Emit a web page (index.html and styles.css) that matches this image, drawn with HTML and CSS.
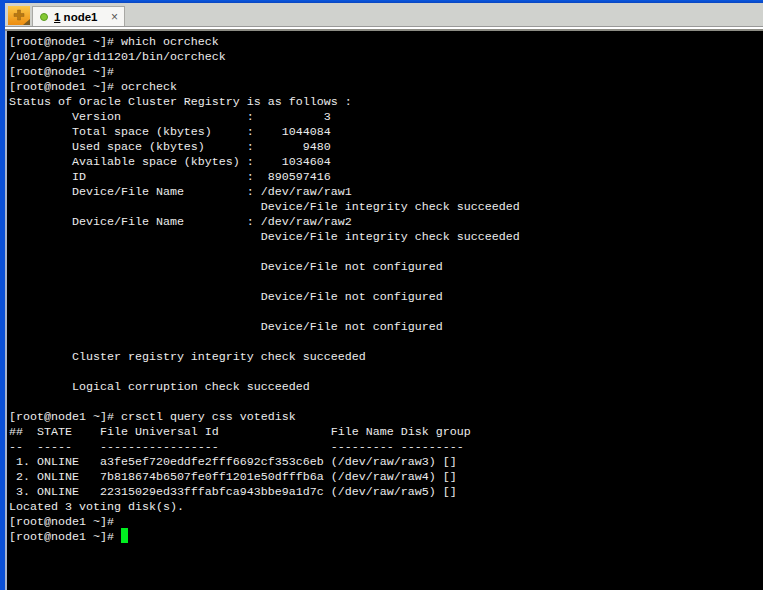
FILE: index.html
```html
<!DOCTYPE html>
<html lang="en">
<head>
<meta charset="utf-8">
<title>node1</title>
<link rel="stylesheet" href="styles.css">
</head>
<body>
<div class="window">
  <div class="titlebar"></div>
  <div class="tabbar">
    <div class="newtab">
      <svg width="22" height="19" viewBox="0 0 22 19"><path d="M9.500 4h3v3.500H16v3h-3.500V14h-3v-3.500H6v-3h3.500z" fill="#b8780f" stroke="#94621a" stroke-width=".5"/><path d="M15 19l7-6v6z" fill="#7a5a20"/></svg>
    </div>
    <div class="tab">
      <span class="dot"></span>
      <span class="tabname"><u>1</u> node1</span>
      <span class="close">×</span>
    </div>
  </div>
  <div class="rule"></div>
  <pre class="term">[root@node1 ~]# which ocrcheck
/u01/app/grid11201/bin/ocrcheck
[root@node1 ~]#
[root@node1 ~]# ocrcheck
Status of Oracle Cluster Registry is as follows :
         Version                  :          3
         Total space (kbytes)     :    1044084
         Used space (kbytes)      :       9480
         Available space (kbytes) :    1034604
         ID                       :  890597416
         Device/File Name         : /dev/raw/raw1
                                    Device/File integrity check succeeded
         Device/File Name         : /dev/raw/raw2
                                    Device/File integrity check succeeded

                                    Device/File not configured

                                    Device/File not configured

                                    Device/File not configured

         Cluster registry integrity check succeeded

         Logical corruption check succeeded

[root@node1 ~]# crsctl query css votedisk
##  STATE    File Universal Id                File Name Disk group
--  -----    -----------------                --------- ---------
 1. ONLINE   a3fe5ef720eddfe2fff6692cf353c6eb (/dev/raw/raw3) []
 2. ONLINE   7b818674b6507fe0ff1201e50dfffb6a (/dev/raw/raw4) []
 3. ONLINE   22315029ed33fffabfca943bbe9a1d7c (/dev/raw/raw5) []
Located 3 voting disk(s).
[root@node1 ~]#
[root@node1 ~]# <span class="cursor"></span></pre>
</div>
</body>
</html>
```
FILE: styles.css
```css
html, body { margin: 0; padding: 0; height: 100%; overflow: hidden; background: #000; }
.window { width: 763px; height: 590px; display: flex; flex-direction: column; border-left: 5px solid #0a50d8; box-sizing: border-box; background: #000; }
.titlebar { height: 3px; background: linear-gradient(#0a58e0, #0a46c0); flex: none; }
.tabbar { height: 23px; flex: none; display: flex; align-items: flex-end; background: #d0d2ce; padding-left: 3px; gap: 2px; }
.newtab { width: 22px; height: 19px; margin-bottom: 1px; background: linear-gradient(#fbc848, #ec8c10); display: flex; overflow: hidden; }
.tab { width: 93px; height: 20px; box-sizing: border-box; background: #f6f6f4; border: 1px solid #a8a8a4; border-bottom: none; display: flex; align-items: center; padding-left: 7px; font: bold 11.5px "Liberation Sans", sans-serif; color: #000; }
.dot { width: 6px; height: 6px; border-radius: 50%; background: #84c832; border: 1px solid #5a9a20; margin-right: 6px; }
.tabname { flex: 1; }
.close { font-weight: normal; font-size: 12px; color: #555; margin-right: 6px; }
.rule { height: 5px; flex: none; box-sizing: border-box; background: #fff; border-top: 1px solid #999; border-bottom: 2px solid #8c8c84; }
.term { flex: 1; margin: 0; padding: 4px 0 0 2px; background: #000; border-left: 2px solid #a8b4cc; color: #ececec; font: 11.67px/15px "Liberation Mono", monospace; }
.cursor { display: inline-block; width: 7px; height: 15px; margin: -12px 0 -3px; background: #00ee20; vertical-align: baseline; }
```
